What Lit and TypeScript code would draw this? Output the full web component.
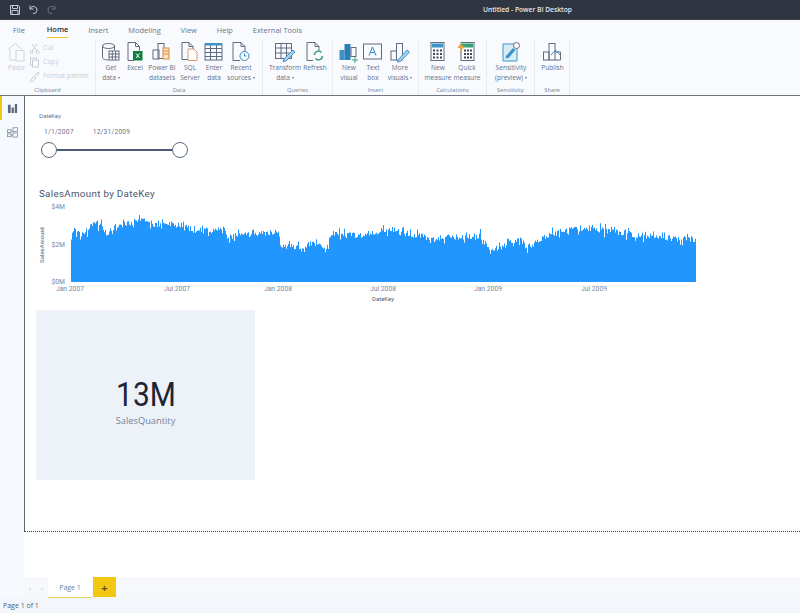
import { LitElement, html, css, svg } from "lit";
import { customElement } from "lit/decorators.js";

const UI = css`"Open Sans", "Noto Sans", sans-serif`;

const line = "#5f6b7e";
const icons: Record<string, unknown> = {
  paste: svg`<g fill="none" stroke="#d3d6da" stroke-width="1"><path d="M2 8.5 9 2.5l7 6"/><path d="M4 8v11h6"/><rect x="10" y="9.500" width="8" height="10.500"/></g>`,
  get: svg`<g fill="none" stroke="${line}" stroke-width="1"><path d="M2.500 5.500v11c0 1.500 3 2.500 6 2.500"/><ellipse cx="8.500" cy="5" rx="6" ry="2.500"/><path d="M14.500 5v4"/><rect x="9" y="10" width="10" height="9" fill="#fff"/><path d="M9 13h10M9 16h10M12.300 10v9M15.600 10v9"/></g>`,
  excel: svg`<g fill="none" stroke="${line}"><path d="M4 1.500h7.500l4 4v4M4 1.500v18h6"/><path d="M11.500 1.500v4h4"/></g><rect x="9" y="10" width="9.500" height="9.500" fill="#107c41"/><path d="m12 12.500 3.500 4.500m0-4.500L12 17" stroke="#fff" fill="none"/>`,
  pbi: svg`<g fill="none" stroke="${line}"><rect x="2" y="9" width="6" height="9"/><rect x="7" y="2.500" width="6" height="15"/></g><rect x="12" y="7" width="6" height="11" fill="#fbe3c5" stroke="#d98e3c"/><path d="M12 10h6M12 13h6" stroke="#d98e3c"/>`,
  sql: svg`<g fill="none" stroke="${line}"><path d="M3 1.500h7l4 4v13H3z"/><path d="M10 1.500v4h4"/></g><g fill="#fff" stroke="#d99a6c"><path d="M9 8h6l3 3v8.500H9z"/></g>`,
  enter: svg`<g fill="none" stroke="${line}"><rect x="2" y="3" width="17" height="16"/><path d="M2 7.500h17M2 11.500h17M2 15.500h17M7.500 3v16M13.500 3v16"/></g><rect x="2" y="2" width="17" height="2.500" fill="#3c93c4"/>`,
  recent: svg`<g fill="none" stroke="${line}"><path d="M3 1.500h8l4 4v5M3 1.500v18h7"/><path d="M11 1.500v4h4"/></g><circle cx="14.500" cy="15" r="4.500" fill="#fff" stroke="#2b88c8"/><path d="M14.500 12.500V15h2" fill="none" stroke="#2b88c8"/>`,
  transform: svg`<g fill="none" stroke="${line}"><rect x="1.500" y="2.500" width="16" height="15"/><path d="M1.500 7h16M1.500 12h16M7 2.500v15M12.500 2.500v15"/></g><path d="m10 18 9-9 2 2-9 9-3 .5z" fill="#a8d0ec" stroke="#3c93c4"/>`,
  refresh: svg`<g fill="none" stroke="${line}"><path d="M3 1.500h8l4 4v4M3 1.500v18h6"/><path d="M11 1.500v4h4"/></g><g fill="none" stroke="#35a07b" stroke-width="1.500"><path d="M10.500 14a4 4 0 0 1 7-2.500M18.500 15a4 4 0 0 1-7 2.500"/></g>`,
  newv: svg`<rect x="1.500" y="9" width="5" height="10" fill="#3c93c4"/><rect x="6.500" y="3" width="6" height="16" fill="#2b7fb8"/><rect x="13" y="6.500" width="5" height="9" fill="none" stroke="${line}"/><path d="M14 19h6M17 16v6" stroke="#35a07b" fill="none"/>`,
  text: svg`<rect x="1.500" y="3" width="18" height="15" fill="none" stroke="${line}"/><path d="m7 14.500 3.500-8.500 3.500 8.500M8.300 11.500h4.500" fill="none" stroke="#2b88c8"/>`,
  more: svg`<g fill="none" stroke="${line}"><rect x="2" y="10" width="5.500" height="9"/><rect x="7.500" y="2.500" width="6" height="16.500"/></g><path d="m9 19 9-10 2.500 2-9 9.500-3 .5z" fill="#a8d0ec" stroke="#3c93c4"/>`,
  measure: svg`<rect x="4" y="1.500" width="13" height="18" fill="#fff" stroke="${line}"/><rect x="5" y="2.500" width="11" height="4" fill="#3c93c4"/><g fill="#3c4656"><rect x="6" y="8.500" width="2" height="2"/><rect x="9.500" y="8.500" width="2" height="2"/><rect x="13" y="8.500" width="2" height="2"/><rect x="6" y="12" width="2" height="2"/><rect x="9.500" y="12" width="2" height="2"/><rect x="13" y="12" width="2" height="2"/><rect x="6" y="15.500" width="2" height="2"/><rect x="9.500" y="15.500" width="2" height="2"/><rect x="13" y="15.500" width="2" height="2"/></g>`,
  quick: svg`<rect x="5" y="1.500" width="13" height="18" fill="#fff" stroke="${line}"/><rect x="6" y="2.500" width="11" height="4" fill="#35a07b"/><g fill="#3c4656"><rect x="8" y="8.500" width="2" height="2"/><rect x="11" y="8.500" width="2" height="2"/><rect x="14" y="8.500" width="2" height="2"/><rect x="8" y="12" width="2" height="2"/><rect x="11" y="12" width="2" height="2"/><rect x="14" y="12" width="2" height="2"/><rect x="8" y="15.500" width="2" height="2"/><rect x="11" y="15.500" width="2" height="2"/><rect x="14" y="15.500" width="2" height="2"/></g><path d="M6 0 1.500 7H5L3.500 12 9 5H5.500z" fill="#f2a33a"/>`,
  sens: svg`<path d="M3 3h11l3 3v14H3z" fill="#d8ecf8" stroke="#3c93c4"/><path d="m6 15 7-8 2.500 2-7 8-3 .5z" fill="#3c93c4"/><circle cx="16.500" cy="4.500" r="3" fill="#fff" stroke="${line}"/>`,
  publish: svg`<g fill="none" stroke="${line}"><rect x="1.500" y="11" width="5.500" height="8"/><rect x="7" y="2.500" width="6" height="16.500"/><path d="M13 11h5.500v8H13"/></g><path d="m9 14 4.500-5 4.500 5" fill="none" stroke="#2b88c8"/>`,
};

const tabs = ["File", "Home", "Insert", "Modeling", "View", "Help", "External Tools"];

type Btn = { icon: string; a: string; b?: string; w: number; caret?: boolean };
type Group = { label: string; w: number; items: Btn[] };
const groups: Group[] = [
  { label: "Data", w: 167, items: [
    { icon: "get", a: "Get", b: "data", w: 28, caret: true },
    { icon: "excel", a: "Excel", w: 20 },
    { icon: "pbi", a: "Power BI", b: "datasets", w: 34 },
    { icon: "sql", a: "SQL", b: "Server", w: 22 },
    { icon: "enter", a: "Enter", b: "data", w: 26 },
    { icon: "recent", a: "Recent", b: "sources", w: 28, caret: true },
  ]},
  { label: "Queries", w: 70, items: [
    { icon: "transform", a: "Transform", b: "data", w: 42, caret: true },
    { icon: "refresh", a: "Refresh", w: 18 },
  ]},
  { label: "Insert", w: 86, items: [
    { icon: "newv", a: "New", b: "visual", w: 30 },
    { icon: "text", a: "Text", b: "box", w: 18 },
    { icon: "more", a: "More", b: "visuals", w: 36, caret: true },
  ]},
  { label: "Calculations", w: 68, items: [
    { icon: "measure", a: "New", b: "measure", w: 36 },
    { icon: "quick", a: "Quick", b: "measure", w: 22 },
  ]},
  { label: "Sensitivity", w: 48, items: [
    { icon: "sens", a: "Sensitivity", b: "(preview)", w: 46, caret: true },
  ]},
  { label: "Share", w: 35, items: [{ icon: "publish", a: "Publish", w: 33 }]},
];

// Silhouette of the area chart: [x, top y] in page pixels
const shape: [number, number][] = [
  [71,235],[75,230],[83,235],[90,225],[100,223],[107,235],[123,222],[142,220],[158,225],[190,225],[193,230],
  [225,228],[227,237],[243,233],[278,232],[280,245],[297,247],[313,242],[328,247],[331,233],[360,235],
  [390,228],[403,233],[433,238],[480,235],[488,247],[503,247],[507,240],[520,240],[527,247],[542,238],
  [557,232],[583,227],[627,233],[660,237],[696,240],
];
function areaPath(): string {
  let seed = 42;
  const rnd = () => ((seed = (seed * 16807) % 2147483647) / 2147483647);
  let d = "M71 281";
  let k = 0;
  for (let x = 71; x <= 695; x++) {
    while (k < shape.length - 2 && shape[k + 1][0] < x) k++;
    const [x0, y0] = shape[k], [x1, y1] = shape[k + 1];
    const base = y0 + ((y1 - y0) * (x - x0)) / (x1 - x0);
    const r = rnd();
    const y = base - 0.5 + (rnd() - 0.5) * 6 - (r > 0.92 ? 4 : 0) + (r < 0.15 ? 4 : 0);
    d += `L${x} ${y.toFixed(1)}L${x + 1} ${y.toFixed(1)}`;
  }
  return d + "L696 281Z";
}
const xLabels: [string, number][] = [["Jan 2007",70],["Jul 2007",177],["Jan 2008",278],["Jul 2008",383],["Jan 2009",488],["Jul 2009",594]];
const yLabels: [string, number][] = [["$4M",208],["$2M",246],["$0M",283]];

@customElement("app-root")
export class AppRoot extends LitElement {
  static styles = css`
    :host { display: flex; flex-direction: column; width: 800px; height: 613px; overflow: hidden; background: #fff; font-family: ${UI}; color: #5d6a80; }
    * { box-sizing: border-box; }
    .title { height: 20px; flex: none; background: #2f3541; display: flex; align-items: center; padding: 0 0 0 9px; gap: 7px; border-bottom: 1px solid #3d4350; }
    .title svg { display: block; }
    .title .name { margin-left: 419px; color: #e6e9ee; font-size: 6.700px; font-weight: 600; white-space: nowrap; }
    .tabs { height: 20px; flex: none; background: #f8fafe; display: flex; align-items: flex-end; padding-left: 13px; font-size: 7.500px; }
    .tab { height: 19px; line-height: 19px; margin-right: 19.800px; color: #6a7689; position: relative; }
    .tab.on { color: #252b36; font-weight: 600; border-bottom: 1.500px solid #f2c811; height: 17px; line-height: 17px; margin-left: 2px; margin-bottom: 2px; }
    .ribbon { height: 56px; flex: none; background: #f8fafe; display: flex; border-bottom: 1px solid #6d7480; font-size: 6.600px; line-height: 9.500px; }
    .group { display: flex; flex-direction: column; border-right: 1px solid #e8ebf0; flex: none; }
    .row { flex: 1; display: flex; justify-content: flex-start; padding-left: 1px; min-height: 0; }
    .glabel { height: 12px; text-align: center; font-size: 5.800px; line-height: 14px; color: #7a8597; }
    .btn { display: flex; flex-direction: column; align-items: center; padding-top: 1px; flex: none; white-space: nowrap; color: #66728a; }
    .btn svg { width: 22px; height: 22px; flex: none; }
    .caret { display: inline-block; width: 0; height: 0; border: 1.800px solid transparent; border-top: 2px solid #66728a; border-bottom: 0; margin-left: 2px; vertical-align: middle; }
    .clip { color: #c9ced6; }
    .paste { width: 28px; padding-left: 3px; }
    .smalls { display: flex; flex-direction: column; font-size: 6.600px; padding-top: 1px; }
    .smalls div { display: flex; align-items: center; gap: 3px; height: 14.500px; }
    .smalls svg { width: 11px; height: 11px; flex: none; }
    .main { display: flex; flex: none; height: 502px; }
    .rail { width: 24px; flex: none; background: #f6f9fd; display: flex; flex-direction: column; }
    .rail div { height: 24px; display: flex; align-items: center; justify-content: center; }
    .rail .on { border-left: 2px solid #f2c811; padding-right: 2px; }
    .rail svg { width: 11px; height: 11px; }
    .stage { flex: 1; min-width: 0; display: flex; flex-direction: column; }
    .canvas { height: 436px; flex: none; border-left: 1px solid #5f6674; border-bottom: 1px dotted #2e3440; padding: 15px 0 0 11px; background: #fff; }
    .slicer { height: 63px; margin-left: 3px; font-family: Roboto, sans-serif; color: #6a7690; }
    .skey { font-size: 6px; line-height: 9px; }
    .dates { display: flex; gap: 19px; font-size: 6.700px; line-height: 10px; margin: 7px 0 0 5px; letter-spacing: .2px; }
    .track { display: flex; align-items: center; margin: 5px 0 0 2px; width: 147px; }
    .knob { width: 16px; height: 16px; border-radius: 50%; border: 1.500px solid #5a6882; background: #fff; flex: none; }
    .rail-line { flex: 1; height: 2px; background: #4c5b78; }
    .ctitle { font-family: Roboto, sans-serif; font-size: 9.800px; letter-spacing: .3px; line-height: 14px; color: #4a566e; margin: 13px 0 0 3px; }
    .chart { display: block; margin: 0 0 0 -1px; width: 675px; height: 104px; }
    .chart text { font-family: Roboto, sans-serif; font-size: 6.800px; fill: #7b879b; }
    .chart .axt { fill: #4f5c74; font-size: 6px; }
    .card { width: 219px; height: 170px; background: #edf2f9; display: flex; flex-direction: column; align-items: center; margin-top: 5px; padding-top: 66px; }
    .big { font-family: Roboto, sans-serif; font-size: 34px; line-height: 36px; color: #1c2533; transform: scaleX(.88); }
    .sub { font-size: 9.300px; line-height: 13px; margin-top: 2px; color: #74849c; }
    .gap { flex: 1; background: #fff; }
    .pages { height: 21px; flex: none; background: #f6f8fc; display: flex; align-items: stretch; }
    .nav { width: 24px; display: flex; align-items: center; justify-content: space-around; color: #c6ccd6; font-size: 8px; }
    .page { width: 44px; background: #fff; border-bottom: 1px solid #e3cf5c; font-size: 7px; display: flex; align-items: center; justify-content: center; color: #6f7e97; margin-right: 1px; }
    .add { width: 23px; background: #f2c811; display: flex; align-items: center; justify-content: center; font-size: 11px; font-weight: 700; color: #5a4f20; margin-bottom: 1px; }
    .status { flex: 1; background: #f3f6fb; font-size: 7px; display: flex; align-items: center; padding-left: 3px; color: #4f5c74; }
  `;

  private btn(b: Btn) {
    return html`<div class="btn" style="width:${b.w}px">
      <svg viewBox="0 0 22 22">${icons[b.icon]}</svg>
      <span>${b.a}</span>
      ${b.b ? html`<span>${b.b}${b.caret ? html`<i class="caret"></i>` : ""}</span>` : ""}
    </div>`;
  }

  render() {
    return html`
      <div class="title">
        <svg width="12" height="12" viewBox="0 0 12 12" fill="none" stroke="#c4c9d2"><path d="M1.500 1.500h8l1 1v8h-9.000z"/><path d="M3.500 1.500v3h5v-3M3 10.500v-4h6v4"/></svg>
        <svg width="11" height="11" viewBox="0 0 11 11" fill="none" stroke="#c4c9d2"><path d="M2 1.500v3.500h3.500M2.200 5A3.500 3.500 0 1 1 5 9.500"/></svg>
        <svg width="11" height="11" viewBox="0 0 11 11" fill="none" stroke="#6c727e"><path d="M9 1.500v3.500H5.500M8.800 5A3.500 3.500 0 1 0 6 9.500"/></svg>
        <span class="name">Untitled - Power BI Desktop</span>
      </div>
      <div class="tabs">${tabs.map((t) => html`<div class="tab ${t === "Home" ? "on" : ""}">${t}</div>`)}</div>
      <div class="ribbon">
        <div class="group clip" style="width:96px">
          <div class="row">
            <div class="btn paste" style="color:#c9ced6"><svg viewBox="0 0 22 22">${icons.paste}</svg><span>Paste</span></div>
            <div class="smalls">
              <div><svg viewBox="0 0 11 11" fill="none" stroke="#c9ced6"><path d="M3 1l5 7M8 1 3 8"/><circle cx="2.500" cy="9" r="1.500"/><circle cx="8.500" cy="9" r="1.500"/></svg>Cut</div>
              <div><svg viewBox="0 0 11 11" fill="none" stroke="#c9ced6"><rect x="1.500" y="1" width="6" height="7"/><rect x="3.500" y="3" width="6" height="7" fill="#f8fafe"/></svg>Copy</div>
              <div><svg viewBox="0 0 11 11" fill="none" stroke="#c9ced6"><path d="M1 10l4-5 2 2-4 4zM6 4l3-3 1 1-3 3"/></svg>Format painter</div>
            </div>
          </div>
          <div class="glabel">Clipboard</div>
        </div>
        ${groups.map((g) => html`
          <div class="group" style="width:${g.w}px">
            <div class="row">${g.items.map((b) => this.btn(b))}</div>
            <div class="glabel">${g.label}</div>
          </div>`)}
      </div>
      <div class="main">
        <div class="rail">
          <div class="on"><svg viewBox="0 0 12 12" fill="#5c6880"><path d="M1 2h3v9H1zM5 5h2.500v6H5zM8.500 1H11v10H8.500z"/></svg></div>
          <div><svg viewBox="0 0 12 12" fill="none" stroke="#8490a4" stroke-width=".9"><rect x=".5" y="3" width="4" height="3"/><rect x=".5" y="7.500" width="4" height="3"/><rect x="6.500" y=".8" width="5" height="4"/><rect x="6.500" y="6.500" width="5" height="4.500"/><path d="M4.500 4.500h2M4.500 9h2"/></svg></div>
        </div>
        <div class="stage">
          <div class="canvas">
            <div class="slicer">
              <div class="skey">DateKey</div>
              <div class="dates"><span>1/1/2007</span><span>12/31/2009</span></div>
              <div class="track"><div class="knob"></div><div class="rail-line"></div><div class="knob"></div></div>
            </div>
            <div class="ctitle">SalesAmount by DateKey</div>
            <svg class="chart" viewBox="35 200 675 104">
              <path d="${areaPath()}" fill="#2196ff"/>
              ${yLabels.map(([t, y]) => svg`<text x="65" y="${y}" text-anchor="end">${t}</text>`)}
              ${xLabels.map(([t, x]) => svg`<text x="${x}" y="290" text-anchor="middle">${t}</text>`)}
              <text class="axt" x="383" y="300" text-anchor="middle">DateKey</text>
              <text class="axt" transform="translate(44 244) rotate(-90)" text-anchor="middle">SalesAmount</text>
            </svg>
            <div class="card">
              <div class="big">13M</div>
              <div class="sub">SalesQuantity</div>
            </div>
          </div>
          <div class="gap"></div>
          <div class="pages">
            <div class="nav"><span>‹</span><span>›</span></div>
            <div class="page">Page 1</div>
            <div class="add">+</div>
          </div>
        </div>
      </div>
      <div class="status">Page 1 of 1</div>
    `;
  }
}
